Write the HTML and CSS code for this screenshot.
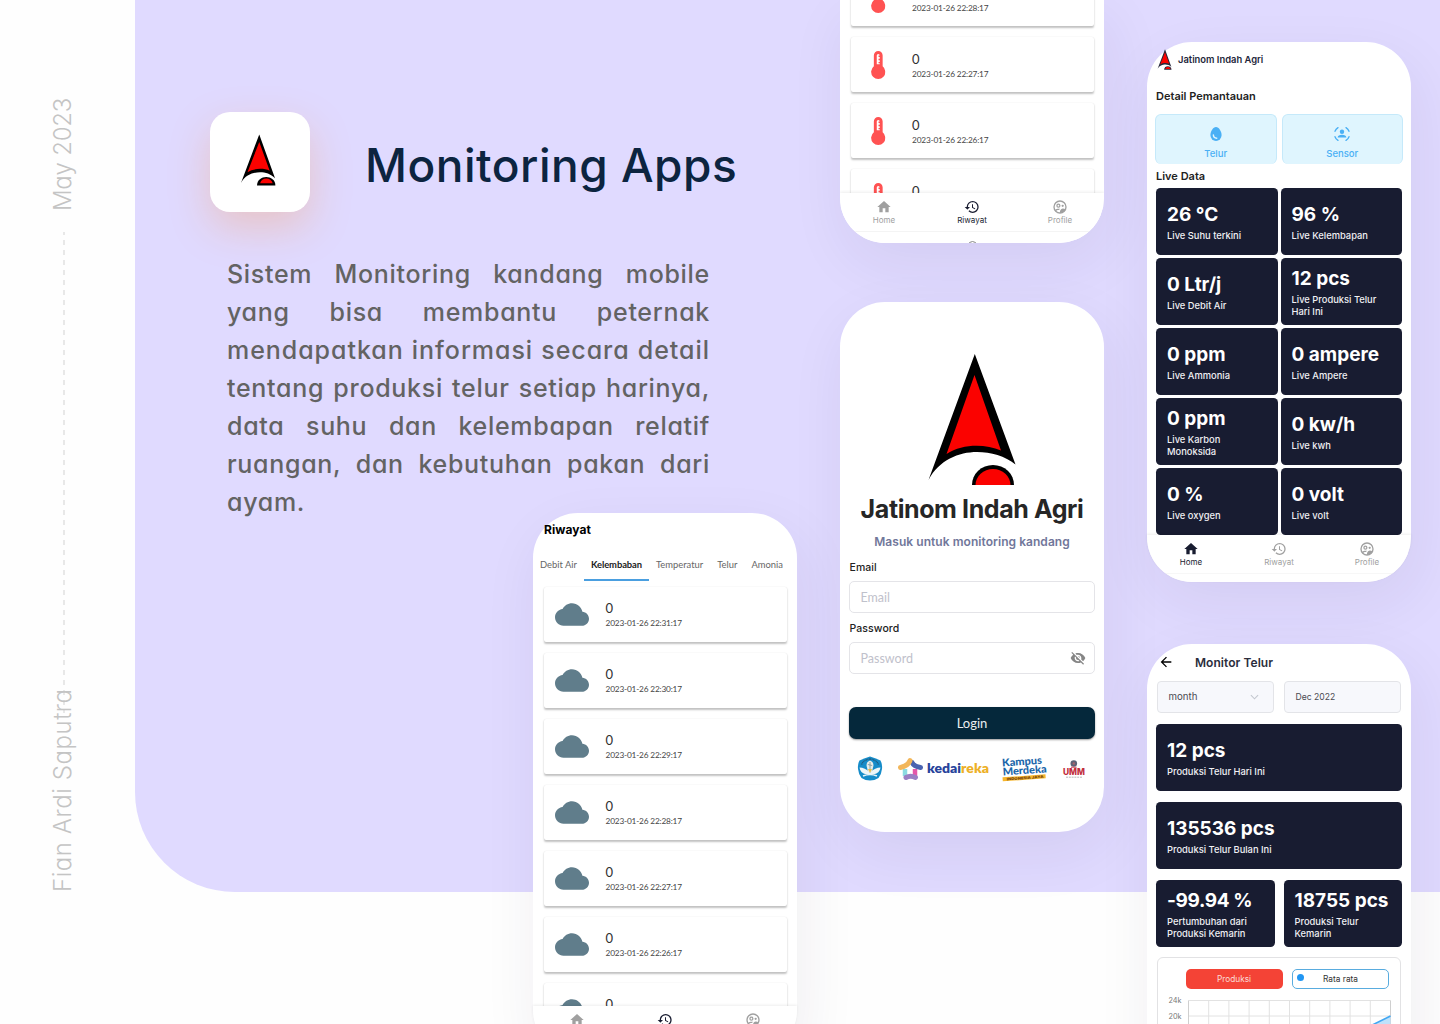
FILE: index.html
```html
<!DOCTYPE html>
<html lang="id">
<head>
<meta charset="utf-8">
<title>Monitoring Apps</title>
<link rel="stylesheet" href="styles.css">
</head>
<body>
<svg width="0" height="0" class="defs" aria-hidden="true">
  <symbol id="home" viewBox="0 0 24 24"><path d="M10 20v-6h4v6h5v-8h3L12 3 2 12h3v8z"/></symbol>
  <symbol id="history" viewBox="0 0 24 24"><path d="M13 3a9 9 0 0 0-9 9H1l3.89 3.89.07.14L9 12H6c0-3.87 3.13-7 7-7s7 3.13 7 7-3.13 7-7 7c-1.93 0-3.68-.79-4.94-2.06l-1.42 1.42A8.954 8.954 0 0 0 13 21a9 9 0 0 0 0-18zm-1 5v5l4.28 2.54.72-1.21-3.5-2.08V8H12z"/></symbol>
  <symbol id="profile" viewBox="0 0 24 24"><circle cx="12" cy="12" r="9" fill="none" stroke="currentColor" stroke-width="2"/><circle cx="9.6" cy="10" r="2.2" fill="none" stroke="currentColor" stroke-width="1.9"/><circle cx="16" cy="10.3" r="1.7"/><path d="M4.4 16.6c1.700-1.700 5-2.500 7.600-1.800l-1.500 1.700c-1.900-.1-3.900.6-4.600 1.700zM12 21c-.3-3.600 1-6.600 4.200-6.800 1.700 0 3 .5 4 1.300-1.400 3.500-4.200 5.500-8.200 5.500z"/></symbol>
  <symbol id="cloud" viewBox="0 4 24 16"><path d="M19.350 10.040C18.670 6.590 15.640 4 12 4 9.110 4 6.600 5.640 5.350 8.040 2.340 8.360 0 10.910 0 14c0 3.310 2.690 6 6 6h13c2.760 0 5-2.240 5-5 0-2.640-2.050-4.780-4.650-4.960z"/></symbol>
  <symbol id="thermo" viewBox="0 0 14 28"><path d="M2.600 4.400a4.400 4.400 0 0 1 8.800 0v10.900a7.100 7.100 0 1 1-8.800 0z"/><path d="M5.500 4.500a1.500 1.500 0 0 1 3 0H7.300v1.500h1.200v1.800H7.300v1.500h1.200v1.700H7.300v1.200h1.200v1h-3z" fill="#fff"/></symbol>
  <symbol id="eyeoff" viewBox="0 0 24 24"><path d="M12 7c2.760 0 5 2.240 5 5 0 .65-.13 1.260-.36 1.830l2.920 2.920c1.510-1.260 2.700-2.890 3.430-4.750-1.730-4.390-6-7.500-11-7.500-1.400 0-2.740.25-3.980.7l2.160 2.160C10.740 7.130 11.350 7 12 7zM2 4.270l2.280 2.280.46.46C3.080 8.300 1.780 10.020 1 12c1.730 4.390 6 7.500 11 7.500 1.550 0 3.030-.3 4.380-.84l.42.42L19.730 22 21 20.730 3.270 3 2 4.270zM7.530 9.800l1.550 1.550c-.05.21-.08.43-.08.65 0 1.660 1.340 3 3 3 .22 0 .44-.03.65-.08l1.550 1.550c-.67.33-1.410.53-2.200.53-2.760 0-5-2.240-5-5 0-.79.2-1.530.53-2.200zm4.310-.78l3.150 3.150.02-.16c0-1.660-1.340-3-3-3l-.17.01z"/></symbol>
  <symbol id="back" viewBox="0 0 24 24"><path d="M20 11H7.830l5.590-5.590L12 4l-8 8 8 8 1.410-1.410L7.830 13H20v-2z"/></symbol>
  <symbol id="egg" viewBox="1 1 22 22"><path d="M12 2.500C8 2.500 4.300 8.600 4.300 13.500a7.700 8 0 0 0 15.400 0C19.700 8.600 16 2.500 12 2.500z"/><path d="M8.400 13.200c0 2.900 2 4.600 4.600 4.600" fill="none" stroke="#dff5fe" stroke-width="2" stroke-linecap="round"/></symbol>
  <symbol id="sensor" viewBox="0 0 24 24"><circle cx="12" cy="8.600" r="3.300"/><path d="M5.500 17.300c0-3 3-4.300 6.500-4.300s6.500 1.300 6.500 4.300z"/><path fill="none" stroke="currentColor" stroke-width="2" stroke-linecap="round" d="M1.500 8a10.500 10.500 0 0 1 4.500-5.500M18 2.500a10.500 10.500 0 0 1 4.500 5.500M1.500 16a10.500 10.500 0 0 0 4.500 5.500M18 21.500a10.500 10.500 0 0 0 4.500-5.500"/></symbol>
  <symbol id="logo" viewBox="0 0 93 134"><path d="M49.800 2 90.500 112.500C80 104 66 100 52 100 34 100 14 108 3.500 128z"/><path d="M49.500 23 21.500 102C38 91.500 60 92 76 98.500z" fill="#fb0200"/><path d="M47 133a21 20 0 0 1 42 0z"/><path d="M50.500 133a17.500 16 0 0 1 35 0z" fill="#fb0200"/></symbol>
  <symbol id="logo-sm" viewBox="0 0 93 136"><path d="M49.800 1 91 116C80 104 66 100 52 100 34 100 14 106 2 128z"/><path d="M49.800 21 19 100C36 89 62 89 77 96z" fill="#fb0200"/><path d="M44 135c0-30 48-30 48 0z"/><path d="M52 129c3-17 29-17 33 0z" fill="#fb0200"/></symbol>
</svg>

<div class="page">
  <aside class="rail">
    <span class="vtext date">May 2023</span>
    <span class="dashes"></span>
    <span class="vtext author">Fian Ardi Saputra</span>
  </aside>

  <main class="canvas">
    <section class="col intro">
      <div class="copy">
        <header class="head">
          <span class="appicon"><svg><use href="#logo-sm"/></svg></span>
          <h1>Monitoring Apps</h1>
        </header>
        <p class="desc">
          <span>Sistem Monitoring kandang mobile</span>
          <span>yang bisa membantu peternak</span>
          <span class="wide">mendapatkan informasi secara detail</span>
          <span>tentang produksi telur setiap harinya,</span>
          <span>data suhu dan kelembapan relatif</span>
          <span>ruangan, dan kebutuhan pakan dari</span>
          <span>ayam.</span>
        </p>
      </div>
      <article class="phone history">
        <h2>Riwayat</h2>
        <nav class="tabs"><span>Debit Air</span><span class="on">Kelembaban</span><span>Temperatur</span><span>Telur</span><span>Amonia</span></nav>
        <div class="list">
          <div class="row"><svg class="cloud"><use href="#cloud"/></svg><div><b>0</b><small>2023-01-26 22:31:17</small></div></div>
          <div class="row"><svg class="cloud"><use href="#cloud"/></svg><div><b>0</b><small>2023-01-26 22:30:17</small></div></div>
          <div class="row"><svg class="cloud"><use href="#cloud"/></svg><div><b>0</b><small>2023-01-26 22:29:17</small></div></div>
          <div class="row"><svg class="cloud"><use href="#cloud"/></svg><div><b>0</b><small>2023-01-26 22:28:17</small></div></div>
          <div class="row"><svg class="cloud"><use href="#cloud"/></svg><div><b>0</b><small>2023-01-26 22:27:17</small></div></div>
          <div class="row"><svg class="cloud"><use href="#cloud"/></svg><div><b>0</b><small>2023-01-26 22:26:17</small></div></div>
          <div class="row"><svg class="cloud"><use href="#cloud"/></svg><div><b>0</b></div></div>
        </div>
        <nav class="bar">
          <span><svg><use href="#home"/></svg>Home</span>
          <span class="on"><svg><use href="#history"/></svg>Riwayat</span>
          <span><svg><use href="#profile"/></svg>Profile</span>
        </nav>
      </article>
    </section>

    <section class="col middle">
      <article class="phone temps">
        <div class="list">
          <div class="row"><svg class="thermo"><use href="#thermo"/></svg><div><b>0</b><small>2023-01-26 22:28:17</small></div></div>
          <div class="row"><svg class="thermo"><use href="#thermo"/></svg><div><b>0</b><small>2023-01-26 22:27:17</small></div></div>
          <div class="row"><svg class="thermo"><use href="#thermo"/></svg><div><b>0</b><small>2023-01-26 22:26:17</small></div></div>
          <div class="row"><svg class="thermo"><use href="#thermo"/></svg><div><b>0</b></div></div>
        </div>
        <nav class="bar">
          <span><svg><use href="#home"/></svg>Home</span>
          <span class="on"><svg><use href="#history"/></svg>Riwayat</span>
          <span><svg><use href="#profile"/></svg>Profile</span>
        </nav>
        <div class="sysbar"><i></i></div>
      </article>

      <article class="phone login">
        <svg class="biglogo"><use href="#logo"/></svg>
        <h2>Jatinom Indah Agri</h2>
        <p class="sub">Masuk untuk monitoring kandang</p>
        <label>Email</label>
        <div class="field">Email</div>
        <label>Password</label>
        <div class="field">Password<svg><use href="#eyeoff"/></svg></div>
        <div class="btn">Login</div>
        <svg class="partners" viewBox="0 0 246 30">
          <g>
            <path d="M21 1.500Q26 3 31.500 5.500 33.500 9 33 14 32.500 19 29.500 23 25.500 25.500 21 25.500 16.500 25.500 12.500 23 9.500 19 9 14 8.500 9 10.500 5.500 16 3 21 1.500z" fill="#168cc9"/>
            <path d="M12.500 9.500Q15 4.500 21 4M29.500 9.500Q27 4.500 21 4" fill="none" stroke="#24587a" stroke-width="1.300" stroke-dasharray="1 .6"/>
            <path d="M10.500 12.500c3.500 0 7 1.500 10.500 5 3.500-3.500 7-5 10.500-5-.5 3.500-3 6-5.500 6.500H16c-2.500-.5-5-3-5.500-6.500z" fill="#eef6f8"/>
            <path d="M21 5.500c3.500 1.500 4 4 3 7l-1 4.500h-4l-1-4.500c-1-3-.5-5.500 3-7z" fill="#e9edea"/>
            <path d="M19 14h4l-2 4z" fill="#e8bd4a"/><path d="M14 21q7-3 14 0" stroke="#e8f3f7" stroke-width="1.600" fill="none"/>
            <path d="M21 7v7M18.800 9.500l4.400 1" stroke="#75939b" stroke-width=".8"/>
          </g>
          <g fill="none" stroke-linecap="round" stroke-width="5">
            <path d="M56 14v7" stroke="#8cdbe2" stroke-width="4.500" stroke-linecap="butt"/>
            <path d="M66 14v7" stroke="#e557aa" stroke-width="4.500" stroke-linecap="butt"/>
            <path d="M63 7.500Q65 11.500 71.500 12.500" stroke="#4a63b0"/>
            <path d="M51.500 12.500Q59 11 61 5.500" stroke="#f2b65a"/>
            <path d="M57 22.500q4.500-2.500 9.500 0" stroke="#9b7fc4"/>
          </g>
          <text x="78" y="18" class="kd" textLength="62" lengthAdjust="spacingAndGlyphs"><tspan fill="#27439b">kedai</tspan><tspan fill="#edb027">reka</tspan></text>
          <g transform="rotate(-4 175 14)">
            <text x="153.500" y="10" class="km" textLength="40" lengthAdjust="spacingAndGlyphs">Kampus</text>
            <text x="153.500" y="19" class="km" textLength="44" lengthAdjust="spacingAndGlyphs">Merdeka</text>
            <path d="M153 20.800h43v4h-43z" fill="#f6b52b"/>
            <text x="157" y="24.200" class="ij" textLength="37" lengthAdjust="spacingAndGlyphs">INDONESIA JAYA</text>
          </g>
          <g>
            <circle cx="224.800" cy="8.500" r="3.300" fill="#5e6377"/><circle cx="224.800" cy="8.500" r="1.200" fill="#a8636e"/>
            <path d="M222 12.200h5.600" stroke="#c8394a" stroke-width="1"/>
            <text x="214" y="19.800" class="um" textLength="22" lengthAdjust="spacingAndGlyphs">UMM</text>
            <path d="M217 22.200h16" stroke="#a6a6a6" stroke-width=".8" stroke-dasharray="2 .8"/>
          </g>
        </svg>
      </article>
    </section>

    <section class="col last">
      <article class="phone live">
        <header class="brand"><svg><use href="#logo-sm"/></svg>Jatinom Indah Agri</header>
        <h3>Detail Pemantauan</h3>
        <div class="modes">
          <div><svg><use href="#egg"/></svg>Telur</div>
          <div><svg><use href="#sensor"/></svg>Sensor</div>
        </div>
        <h3 class="ld">Live Data</h3>
        <div class="tiles">
          <div class="tile"><b>26 °C</b><span>Live Suhu terkini</span></div>
          <div class="tile"><b>96 %</b><span>Live Kelembapan</span></div>
          <div class="tile"><b>0 Ltr/j</b><span>Live Debit Air</span></div>
          <div class="tile"><b>12 pcs</b><span>Live Produksi Telur<br>Hari Ini</span></div>
          <div class="tile"><b>0 ppm</b><span>Live Ammonia</span></div>
          <div class="tile"><b>0 ampere</b><span>Live Ampere</span></div>
          <div class="tile"><b>0 ppm</b><span>Live Karbon<br>Monoksida</span></div>
          <div class="tile"><b>0 kw/h</b><span>Live kwh</span></div>
          <div class="tile"><b>0 %</b><span>Live oxygen</span></div>
          <div class="tile"><b>0 volt</b><span>Live volt</span></div>
        </div>
        <nav class="bar">
          <span class="on"><svg><use href="#home"/></svg>Home</span>
          <span><svg><use href="#history"/></svg>Riwayat</span>
          <span><svg><use href="#profile"/></svg>Profile</span>
        </nav>
      </article>

      <article class="phone eggs">
        <header class="title"><svg><use href="#back"/></svg>Monitor Telur</header>
        <div class="filters">
          <div class="month">month<svg viewBox="0 0 10 6"><path d="M1 1l4 4 4-4" fill="none" stroke="#c3c7cf" stroke-width="1.200"/></svg></div>
          <div>Dec 2022</div>
        </div>
        <div class="tile"><b>12 pcs</b><span>Produksi Telur Hari Ini</span></div>
        <div class="tile"><b>135536 pcs</b><span>Produksi Telur Bulan Ini</span></div>
        <div class="pair">
          <div class="tile"><b class="tight">-99.94 %</b><span>Pertumbuhan dari<br>Produksi Kemarin</span></div>
          <div class="tile"><b>18755 pcs</b><span>Produksi Telur<br>Kemarin</span></div>
        </div>
        <div class="chart">
          <div class="legend"><span class="red">Produksi</span><span class="blue"><i></i>Rata rata</span></div>
          <div class="plot">
            <div class="axis"><span>24k</span><span>20k</span></div>
            <svg viewBox="0 0 203 60" width="203" height="60">
              <path d="M.5.500h202M.5 16h202M.5 31.500h202M20.700.500v60M40.900.500v60M61.100.500v60M81.300.500v60M101.500.500v60M121.700.500v60M141.900.500v60M162.100.500v60M182.300.500v60" stroke="#e2e2e2" fill="none"/>
              <path d="M.5 60V.5M202.500.500V60" stroke="#cfcfcf"/>
              <path d="M170 32 202.500 16v20H170z" fill="#bfe2fb"/>
              <path d="M170 32 202.500 16" stroke="#41a7f2" stroke-width="1.600"/>
            </svg>
          </div>
        </div>
      </article>
    </section>
  </main>
</div>
</body>
</html>
```
FILE: styles.css
```css
* { box-sizing: border-box; }
body { margin: 0; background: #fefefe; font-family: Inter, "Liberation Sans", sans-serif; }
h1, h2, h3, p { margin: 0; }
svg { display: block; fill: currentColor; }
.defs { position: absolute; }

.page { width: 1440px; height: 1024px; overflow: hidden; display: grid; grid-template-columns: 135px 1fr; }

/* vertical caption rail */
.rail { display: flex; flex-direction: column; align-items: center; padding: 97px 10px 0 0; height: 1024px; }
.vtext { writing-mode: vertical-rl; transform: rotate(180deg); font-size: 24px; line-height: 32px; font-weight: 350; color: #c4c4c4; white-space: nowrap; font-feature-settings: "cv11"; }
.date { height: 114px; letter-spacing: -.25px; }
.dashes { width: 2px; height: 481px; margin: 21px 0 -28px 3px; background: repeating-linear-gradient(#e8e8e8 0 5px, transparent 5px 10px) 0 -2px; }
.author { height: 207px; letter-spacing: .55px; }

.canvas { height: 892px; background: #e0daff; border-radius: 0 0 0 100px; display: grid; grid-template-columns: 662px 264px 264px; column-gap: 43px; }
.col { display: flex; flex-direction: column; }

/* intro copy */
.copy { height: 513px; padding: 112px 0 0 75px; flex: none; }
.head { display: flex; align-items: center; gap: 55px; height: 100px; }
.appicon { width: 100px; height: 100px; border-radius: 20px; background: #fff; display: grid; place-items: center; box-shadow: 0 16px 40px rgba(255, 130, 30, .25); }
.appicon svg { width: 36px; height: 52px; margin: -4px 0 0 -4px; }
h1 { font-size: 46px; line-height: 60px; font-weight: 500; color: #0c2440; white-space: nowrap; font-feature-settings: "cv11"; margin-top: 5px; letter-spacing: .5px; }
.desc { margin: 43px 0 0 17px; width: 483px; font-size: 25px; line-height: 38px; font-weight: 450; color: #636363; letter-spacing: .7px; font-feature-settings: "cv11"; }
.desc span { display: block; text-align-last: justify; white-space: nowrap; }
.desc .wide { letter-spacing: .95px; }
.desc span:last-child { text-align-last: left; }

/* phones */
.phone { width: 264px; background: #fff; border-radius: 45px; overflow: hidden; display: flex; flex-direction: column; flex: none; box-shadow: 5px 20px 60px rgba(40, 30, 70, .07); position: relative; }
.bar { display: flex; height: 38px; padding-top: 6px; flex: none; background: #fff; box-shadow: 0 -1px 3px rgba(0, 0, 0, .07); position: relative; font-size: 8px; line-height: 11px; color: #a0a0a0; }
.bar span { flex: 1; display: flex; flex-direction: column; align-items: center; }
.bar svg { width: 16px; height: 16px; }
.bar .on { color: #181c30; }
.list { display: flex; flex-direction: column; gap: 11px; padding: 0 10.500px; flex: 1; min-height: 0; overflow: hidden; font-family: Lato, sans-serif; }
.row { height: 55px; flex: none; display: flex; align-items: center; background: #fff; border-radius: 2px; box-shadow: 0 1.500px 2px rgba(0, 0, 0, .24), 0 0 1px rgba(0, 0, 0, .08); }
.row div { display: flex; flex-direction: column; height: 29px; }
.row b { font-weight: 400; font-size: 13px; line-height: 17px; color: #303030; }
.row small { font-size: 8.300px; line-height: 12px; color: #444; white-space: nowrap; letter-spacing: -.18px; }
.cloud { width: 34px; height: 23px; margin: 0 17px 0 11px; color: #607d8b; }
.thermo { width: 14.500px; height: 28px; margin: 0 26.500px 0 20.500px; color: #ff5252; }

.history { height: 542px; margin-left: 398px; overflow: visible; }
.history h2 { font-size: 12px; line-height: 16px; margin: 9px 0 0 11px; letter-spacing: .05px; }
.tabs { display: flex; height: 29px; margin-top: 14px; align-items: stretch; font: 9.400px/26px Lato, sans-serif; color: #666; flex: none; white-space: nowrap; }
.tabs span { padding: 0 7px; }
.tabs .on { color: #222; font-weight: 700; border-bottom: 2px solid #4a9fe0; letter-spacing: -.07px; }
.history .list { padding: 6px 10.500px 0; }
.history .bar { height: 49px; border-radius: 0 0 45px 45px; }

.temps { height: 243px; border-radius: 0 0 45px 45px; }
.temps .list { margin-top: -29px; padding-top: 0; }
.temps .row div { padding-top: 1px; height: 30px; }
.sysbar { height: 12px; border-top: 1px solid #f4f4f4; overflow: hidden; display: flex; justify-content: center; padding-top: 9px; flex: none; background: #fff; position: relative; }
.sysbar i { width: 9px; height: 9px; border: 1px solid #888; border-radius: 50%; }
.login { height: 530px; margin-top: 59px; padding: 50px 9px 0; }
.biglogo { width: 93px; height: 134px; margin: 0 0 0 76px; flex: none; }
.login h2 { font-size: 25px; line-height: 32px; text-align: center; color: #262626; margin: 7px 0 0; letter-spacing: -.4px; white-space: nowrap; }
.sub { font-size: 12px; line-height: 16px; font-weight: 600; text-align: center; color: #71779a; margin: 9px 0 11px; letter-spacing: .05px; }
.login label { font-size: 10.500px; line-height: 14px; font-weight: 500; color: #222; padding-left: .5px; letter-spacing: .08px; }
.field { height: 32px; margin: 6px 0 9px; border: 1px solid #e4e4e8; border-radius: 5px; padding: 0 8px 0 10.500px; display: flex; align-items: center; justify-content: space-between; font: 12.500px Lato, sans-serif; color: #bfc1cb; flex: none; }
.field svg { width: 16px; height: 16px; color: #858585; }
.btn { height: 32px; flex: none; margin: 24px 0 16px; border-radius: 7px; background: #05283b; color: #e9edf0; font: 13px/32px Lato, sans-serif; text-align: center; box-shadow: 0 1px 2px rgba(0, 0, 0, .4); }
.partners { width: 246px; height: 30px; flex: none; }
.kd { font: 800 12.500px Lato, sans-serif; }
.km { font: 900 10.500px Lato, sans-serif; fill: #1b66aa; }
.ij { font: 900 3.600px Inter, sans-serif; fill: #7b4a10; }
.um { font: 800 9px Inter, sans-serif; fill: #c22e3d; }

.live { height: 540px; margin-top: 42px; padding: 0 9px; overflow: visible; }
.brand { display: flex; align-items: center; height: 35px; gap: 6px; font-size: 9.400px; font-weight: 600; color: #23263a; padding-left: 1px; flex: none; }
.brand svg { width: 15px; height: 21px; }
.live h3 { font-size: 11px; line-height: 16px; font-weight: 600; color: #222; margin-top: 11px; }
.modes { display: flex; gap: 5px; margin: 10px -1px 0; height: 50px; flex: none; }
.modes div { flex: 1; display: flex; flex-direction: column; align-items: center; padding-top: 11px; border: 1.500px solid #c5e9fa; border-bottom: 0; border-radius: 6px; background: #dff5fe; color: #4ab0f5; font-size: 9.500px; line-height: 14px; font-weight: 500; }
.modes svg { width: 16px; height: 16px; margin-bottom: 5px; flex: none; }
.live h3.ld { margin: 4px 0 4px; }
.tiles { display: grid; grid-template-columns: 1fr 1fr; gap: 3px; }
.tile { height: 67px; flex: none; border-radius: 4.500px; background: #181c31; color: #fff; padding: 1px 0 0 11px; display: flex; flex-direction: column; justify-content: center; }
.tile b { font-size: 19px; line-height: 24px; font-weight: 700; margin-bottom: 3.500px; white-space: nowrap; }
.tile .tight { letter-spacing: -.35px; }
.tile span { font-size: 9.350px; line-height: 11.500px; font-weight: 500; color: #f0f0f4; white-space: nowrap; }
.live .bar { margin: 0 -9px; height: 47px; border-radius: 0 0 45px 45px; background: linear-gradient(#f7f7f7, #f7f7f7) 0 38px / 100% 1px no-repeat #fff; }

.eggs { height: 540px; margin-top: 62px; padding: 0 9px; }
.title { display: flex; align-items: center; gap: 21px; height: 37px; font-size: 12px; font-weight: 600; color: #2b2d3c; letter-spacing: .05px; flex: none; padding-bottom: 1px; }
.title svg { width: 16px; height: 16px; color: #000; margin-left: 2px; }
.filters { display: flex; gap: 10px; margin: 0 1px 11px; height: 32px; flex: none; }
.filters div { flex: 1; border: 1px solid #e3e4e8; border-radius: 4px; background: #f7f8fc; padding: 0 14px 1px 10.500px; display: flex; align-items: center; justify-content: space-between; font-size: 8.600px; color: #4a4a52; }
.filters .month { font-size: 9.700px; }
.filters svg { width: 9px; height: 6px; }
.eggs > .tile { margin-bottom: 11px; }
.pair { display: grid; grid-template-columns: 118.500px 118.500px; gap: 9px; }
.chart { margin: 10px 0 0 1px; width: 244px; height: 120px; border: 1px solid #e2e2e4; border-radius: 6px; padding: 11px 10.500px 0; flex: none; }
.legend { display: flex; gap: 9.500px; padding-left: 17px; }
.legend span { width: 97px; height: 20px; border-radius: 5px; font-size: 8.300px; line-height: 20px; text-align: center; color: #333; position: relative; }
.legend .red { background: #f44336; color: #fbdcd8; }
.legend .blue { border: 1px solid #59acdf; line-height: 18px; }
.legend i { position: absolute; left: 4px; top: 4px; width: 7px; height: 7px; border-radius: 50%; background: #2196f3; }
.plot { display: flex; margin-top: 11px; gap: 6px; width: 240px; }
.axis { width: 13px; display: flex; flex-direction: column; gap: 4.500px; font-size: 7.300px; line-height: 11px; margin-top: -5px; color: #777; align-items: flex-end; }
.plot svg { flex: none; }
```
